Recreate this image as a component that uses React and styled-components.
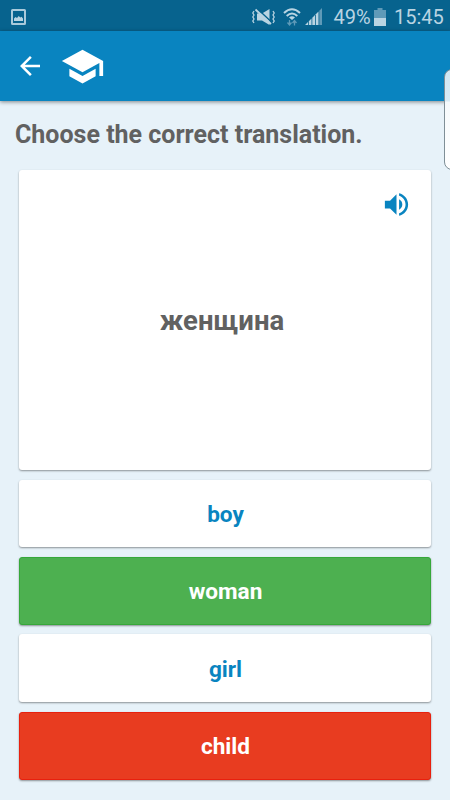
import React from "react";
import styled, { createGlobalStyle } from "styled-components";

const GlobalStyle = createGlobalStyle`
  * {
    box-sizing: border-box;
  }
  body {
    margin: 0;
    background-color: #e7f2f9;
    font-family: Roboto, "Noto Sans", sans-serif;
  }
`;

const Page = styled.div`
  position: relative;
  display: flex;
  flex-direction: column;
  width: 450px;
  height: 800px;
  overflow: hidden;
  background-color: #e7f2f9;
`;

const StatusBar = styled.div`
  display: flex;
  align-items: center;
  height: 31px;
  padding: 2px 8px 0 11px;
  background-color: #07638e;
  color: #b9d4e2;
`;

const StatusIcon = styled.svg`
  flex: none;
  margin-left: ${props => props.$gap || 0}px;
`;

const StatusSpacer = styled.div`
  flex: 1;
`;

const StatusText = styled.div`
  width: ${props => props.$width}px;
  margin-left: ${props => props.$gap}px;
  font-size: 20px;
  line-height: 28px;
  white-space: nowrap;
`;

const AppBar = styled.div`
  display: flex;
  align-items: center;
  height: 70px;
  padding-left: 15px;
  background-color: #0984c0;
  box-shadow: 0 1px 4px rgba(0, 0, 0, 0.45);
`;

const BarIcon = styled.svg`
  display: block;
  width: ${props => props.$size}px;
  height: ${props => props.$size}px;
  margin-left: ${props => props.$gap || 0}px;
  fill: white;
`;

const Content = styled.div`
  display: flex;
  flex-direction: column;
  padding: 17px 18.6px 0 18.6px;
`;

const Title = styled.div`
  height: 34px;
  margin: 0 0 17.5px -3.6px;
  font-size: 25px;
  line-height: 34px;
  font-weight: bold;
  color: #616161;
  white-space: nowrap;
`;

const Card = styled.div`
  border-radius: 3px;
  background-color: white;
  box-shadow: 0 1px 2px rgba(0, 0, 0, 0.4);
`;

const WordCard = styled(Card)`
  display: flex;
  flex-direction: column;
  height: 300.5px;
`;

const SpeakerButton = styled.div`
  align-self: flex-end;
  height: 31px;
  margin: 19.5px 19.4px 0 0;
`;

const Word = styled.div`
  margin-top: 84px;
  padding-right: 6px;
  font-size: 27.5px;
  line-height: 34px;
  font-weight: bold;
  text-align: center;
  color: #616161;
`;

const AnswerList = styled.div`
  display: flex;
  flex-direction: column;
  gap: 9.8px;
  margin-top: 9.5px;
`;

const Answer = styled(Card)`
  display: flex;
  justify-content: center;
  align-items: center;
  height: 67.7px;
  padding: 2px 0 0 1px;
  font-size: 22.6px;
  font-weight: bold;
  color: ${props => (props.$bg ? "white" : "#0984c0")};
  background-color: ${props => props.$bg || "white"};
  ${props => props.$edge && `border: 1px solid ${props.$edge};`}
`;

const EdgePanel = styled.div`
  position: absolute;
  top: 69px;
  left: 444px;
  width: 24px;
  height: 101px;
  border: 1px solid #7f8f97;
  border-radius: 8px;
  background: linear-gradient(
    to bottom,
    #cfe6f2 0,
    #d9ebf5 31px,
    #f6fafc 32px,
    #ffffff 100%
  );
`;

const answers = [
  { text: "boy" },
  { text: "woman", bg: "#4db050", edge: "#36a83a" },
  { text: "girl" },
  { text: "child", bg: "#e83c20", edge: "#e8200e" }
];

export default () => {
  return (
    <Page>
      <GlobalStyle />
      <StatusBar>
        <StatusIcon width="15" height="16" viewBox="0 0 15 16" fill="none">
          <rect x="1" y="1" width="13" height="14" rx="0.5" stroke="#a9cadb" strokeWidth="2" />
          <path d="M3 12V9.500l1.500-1.500 1.500 1 1.700-2 1.600 1.500 1.200-.8L12 9.500V12z" fill="#b9d4e2" />
        </StatusIcon>
        <StatusSpacer />
        <StatusIcon width="25" height="18" viewBox="0 0 25 18" fill="none">
          <path d="M6 5.500h5L18.500 1v16L11 12.500H6z" fill="#b9d4e2" />
          <path d="M6 .5l15.500 14.500" stroke="#07638e" strokeWidth="1.6" />
          <path d="M4.500 1.500l15.500 14.500" stroke="#b9d4e2" strokeWidth="1.8" />
          <path
            d="M3 3l-1.200 2L3 7 1.800 9 3 11l-1.200 2L3 15M22 3l1.200 2L22 7l1.200 2L22 11l1.200 2L22 15"
            stroke="#b9d4e2"
            strokeWidth="1.3"
          />
        </StatusIcon>
        <StatusIcon $gap={7} width="18" height="18" viewBox="0 0 18 18" fill="none">
          <path
            d="M1 5Q9-2.500 17 5M3.700 8Q9 3 14.300 8"
            stroke="#b9d4e2"
            strokeWidth="2"
          />
          <path d="M6 9.500Q9 7 12 9.500L9 12z" fill="#b9d4e2" />
          <path
            d="M6.500 17v-5M4.500 14.500l2 2.500 2-2.500M11.500 17.500v-5M9.500 15l2-2.500 2 2.500"
            stroke="#5f9ab8"
            strokeWidth="1.3"
          />
        </StatusIcon>
        <StatusIcon $gap={4} width="18" height="17" viewBox="0 0 18 17">
          <path d="M0 17l3-3v3zM3.800 17v-3.800L6.500 10.500V17zM7.300 17V9.700L10 7v10z" fill="#b9d4e2" />
          <path d="M10.800 17V6.200l2.700-2.700V17z" fill="#b9d4e2" />
          <path d="M14.300 17V2.700L17 0v17z" fill="#5f9ab8" />
        </StatusIcon>
        <StatusText $gap={10.5} $width={37}>
          49%
        </StatusText>
        <StatusIcon $gap={3} width="12" height="18" viewBox="0 0 12 18">
          <path d="M3.500 0h5v2H12v8H0V2h3.500z" fill="#5f9ab8" />
          <path d="M0 10h12v8H0z" fill="#b9d4e2" />
        </StatusIcon>
        <StatusText $gap={8.5} $width={48}>
          15:45
        </StatusText>
      </StatusBar>
      <AppBar>
        <BarIcon $size={30} viewBox="0 0 24 24">
          <path d="M20 11H7.830l5.590-5.590L12 4l-8 8 8 8 1.410-1.410L7.830 13H20v-2z" />
        </BarIcon>
        <BarIcon $size={45} $gap={15} viewBox="0 0 24 24">
          <path d="M5 13.180v4L12 21l7-3.820v-4L12 17l-7-3.820zM12 3L1 9l11 6 9-4.910V17h2V9L12 3z" />
        </BarIcon>
      </AppBar>
      <Content>
        <Title>Choose the correct translation.</Title>
        <WordCard>
          <SpeakerButton>
            <svg width="31" height="31" viewBox="0 0 24 24" fill="#0984c0">
              <path d="M3 9v6h4l5 5V4L7 9H3zm13.500 3c0-1.770-1.020-3.290-2.500-4.030v8.050c1.480-.73 2.500-2.250 2.500-4.020zM14 3.230v2.060c2.890.86 5 3.540 5 6.710s-2.110 5.850-5 6.710v2.060c4.010-.91 7-4.490 7-8.770s-2.990-7.860-7-8.770z" />
            </svg>
          </SpeakerButton>
          <Word>женщина</Word>
        </WordCard>
        <AnswerList>
          {answers.map(answer => (
            <Answer key={answer.text} $bg={answer.bg} $edge={answer.edge}>
              {answer.text}
            </Answer>
          ))}
        </AnswerList>
      </Content>
      <EdgePanel />
    </Page>
  );
};
